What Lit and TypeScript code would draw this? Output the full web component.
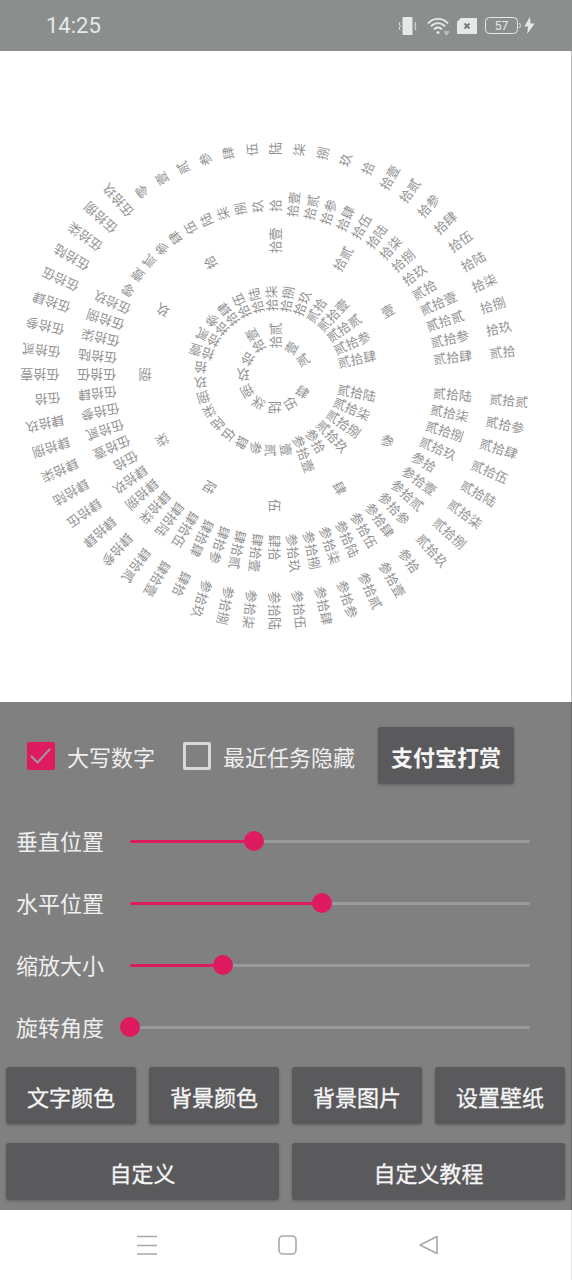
import { LitElement, html, css, svg } from "lit";
import { customElement } from "lit/decorators.js";

const D = ["", "壹", "贰", "参", "肆", "伍", "陆", "柒", "捌", "玖"];
function cn(n: number): string {
  if (n === 0) return "零";
  if (n < 10) return D[n];
  const t = Math.floor(n / 10);
  const o = n % 10;
  return (t === 1 ? "" : D[t]) + "拾" + D[o];
}
const CX = 275;
const CY = 324.4;

interface Ring { start: number; count: number; current: number; r: number; single: number; }
const RINGS: Ring[] = [
  { start: 1, count: 12, current: 3, r: 27, single: 25.5 },
  { start: 1, count: 31, current: 25, r: 64, single: 68.5 },
  { start: 1, count: 12, current: 2, r: 122, single: 123.5 },
  { start: 0, count: 60, current: 25, r: 159, single: 163.5 },
  { start: 0, count: 60, current: 21, r: 215.7, single: 220.5 },
];

@customElement("clock-face")
class ClockFace extends LitElement {
  static styles = css`
    :host { display: block; height: 651px; box-sizing: border-box; border-right: 1px solid #bdbdbd; }
    svg { display: block; width: 572px; height: 651px; opacity: 0.99; }
    text { font-family: "Noto Sans CJK SC", sans-serif; font-size: 13px; fill: #929292; dominant-baseline: central; }
    text.on { fill: #ffffff; }
  `;
  render() {
    const items = RINGS.flatMap((ring) => {
      const out = [];
      for (let i = 0; i < ring.count; i++) {
        const v = ring.start + i;
        const a = ((v - ring.current) * 360) / ring.count;
        const label = cn(v);
        const r = label.length === 1 ? ring.single : ring.r;
        out.push(svg`<text class=${v === ring.current ? "on" : ""} x=${CX + r} y=${CY} transform=${`rotate(${a.toFixed(2)} ${CX} ${CY})`}>${label}</text>`);
      }
      return out;
    });
    return html`<svg viewBox="0 0 572 651">${items}</svg>`;
  }
}

@customElement("app-root")
export class AppRoot extends LitElement {
  static styles = css`
    :host { display: block; width: 572px; height: 1280px; background: #fff; font-family: "Noto Sans CJK SC", "Noto Sans", sans-serif; overflow: hidden; }
    .status { height: 51px; background: #8a8f8e; display: flex; align-items: center; padding: 0 37px 0 46px; color: #e6e9e8; }
    .time { font-family: Roboto, sans-serif; font-size: 22px; flex: 1; }
    .icons { display: flex; align-items: center; }
    .vib { margin-right: 10px; }
    .wifi { margin-right: 7px; }
    .sim { margin-right: 8px; }
    .batt { margin-right: 2px; }
    .panel { background: #808080; height: 508px; padding: 25px 6px 0; box-sizing: border-box; display: flex; flex-direction: column; color: #efefef; border-right: 1px solid #686868; }
    .top { display: flex; align-items: center; height: 57px; padding-left: 21px; }
    .check { display: flex; align-items: center; font-size: 22px; }
    .box { width: 28px; height: 28px; border-radius: 2px; box-sizing: border-box; margin-right: 12px; display: flex; align-items: center; justify-content: center; }
    .box.on { background: #de1a60; }
    .box.off { border: 3px solid #d8d8d8; }
    .c1 { width: 156px; }
    .c2 { width: 195px; }
    .btn { background: #5a5a5c; border-radius: 3px; display: flex; align-items: center; justify-content: center; font-size: 22px; color: #f6f6f6; height: 57px; box-shadow: 0 1px 3px rgba(0,0,0,.25); -webkit-text-stroke: 0.3px #f6f6f6; }
    .pay { width: 136px; font-weight: 700; -webkit-text-stroke: 0; }
    .sliders { display: flex; flex-direction: column; gap: 22px; margin-top: 38px; padding-left: 10px; }
    .row { display: flex; align-items: center; height: 40px; font-size: 22px; }
    .lbl { width: 114px; margin-bottom: 4px; }
    .track { position: relative; width: 400px; height: 3px; border-radius: 2px; background: #9a9a9a; margin-top: -2px; }
    .fill { height: 100%; background: #de1a60; border-radius: 2px; }
    .thumb { position: absolute; top: -8.500px; width: 20px; height: 20px; margin-left: -10px; border-radius: 50%; background: #de1a60; }
    .grid4 { display: grid; grid-template-columns: repeat(4, 130px); column-gap: 13px; margin-top: 19px; }
    .grid2 { display: grid; grid-template-columns: repeat(2, 273px); column-gap: 13px; margin-top: 19px; }
    .nav { height: 70px; display: flex; align-items: center; box-sizing: border-box; border-right: 1px solid #e4e4e4; }
    .navin { display: grid; grid-template-columns: repeat(3, 141px); margin-left: 76px; justify-items: center; margin-bottom: 1px; }
  `;
  render() {
    const sl: [string, number][] = [["垂直位置", 31], ["水平位置", 48], ["缩放大小", 23.25], ["旋转角度", 0]];
    return html`
      <div class="status">
        <span class="time">14:25</span>
        <div class="icons">
          <svg class="vib" width="19" height="20" viewBox="0 0 19 20"><rect x="4.500" y="1" width="10" height="18" rx="1" fill="#e6e9e8"/><path d="M2 6l-1 2 1.500 2-1.500 2 1 2M17 6l1 2-1.500 2 1.500 2-1 2" fill="none" stroke="#e6e9e8" stroke-width="1"/></svg>
          <svg class="wifi" width="23" height="20" viewBox="0 0 23 20"><path d="M1 7.500a13 13 0 0 1 20 0M4 10.500a9 9 0 0 1 14 0M7 13.500a5 5 0 0 1 8 0" fill="none" stroke="#e6e9e8" stroke-width="1.800"/><circle cx="11" cy="16.500" r="1.500" fill="#e6e9e8"/><path d="M17 16h5M18 18h3" stroke="#e6e9e8" stroke-width="1"/></svg>
          <svg class="sim" width="20" height="16" viewBox="0 0 20 16"><path d="M4 0h15a1 1 0 0 1 1 1v14a1 1 0 0 1-1 1H1a1 1 0 0 1-1-1V4z" fill="#e6e9e8"/><path d="M7.500 5.500l5 5M12.500 5.500l-5 5" stroke="#777" stroke-width="1.800"/></svg>
          <svg class="batt" width="37" height="17" viewBox="0 0 37 17"><rect x=".5" y=".5" width="32" height="16" rx="4" fill="none" stroke="#e6e9e8"/><path d="M34.500 6a4 4 0 0 1 0 5" fill="none" stroke="#e6e9e8"/><text x="16.500" y="13" font-size="12" text-anchor="middle" fill="#e6e9e8" font-family="Roboto">57</text></svg>
          <svg width="11" height="17" viewBox="0 0 11 18"><path d="M6 0L0 10h4l-1 8 8-11H6.500z" fill="#e6e9e8"/></svg>
        </div>
      </div>
      <clock-face></clock-face>
      <div class="panel">
        <div class="top">
          <div class="check c1"><span class="box on"><svg width="28" height="28" viewBox="0 0 28 28"><path d="M4 14l6.500 6.500L23 7" fill="none" stroke="#a09a9c" stroke-width="2"/></svg></span>大写数字</div>
          <div class="check c2"><span class="box off"></span>最近任务隐藏</div>
          <div class="btn pay">支付宝打赏</div>
        </div>
        <div class="sliders">
          ${sl.map(([l, v]) => html`<div class="row"><span class="lbl">${l}</span><div class="track"><div class="fill" style="width:${v}%"></div><div class="thumb" style="left:${v}%"></div></div></div>`)}
        </div>
        <div class="grid4">
          ${["文字颜色", "背景颜色", "背景图片", "设置壁纸"].map((t) => html`<div class="btn">${t}</div>`)}
        </div>
        <div class="grid2">
          ${["自定义", "自定义教程"].map((t) => html`<div class="btn">${t}</div>`)}
        </div>
      </div>
      <div class="nav">
        <div class="navin">
          <svg width="20" height="20" viewBox="0 0 20 20"><path d="M0 1.500h20M0 10.500h20M0 19h20" stroke="#a8a8a8" stroke-width="1.600"/></svg>
          <svg width="20" height="20" viewBox="0 0 20 20"><rect x="1" y="1" width="17" height="18" rx="4" fill="none" stroke="#a8a8a8" stroke-width="1.600"/></svg>
          <svg width="20" height="20" viewBox="0 0 20 20"><path d="M1 10L18 1.500v17z" fill="none" stroke="#a8a8a8" stroke-width="1.600" stroke-linejoin="round"/></svg>
        </div>
      </div>
    `;
  }
}
void ClockFace;
